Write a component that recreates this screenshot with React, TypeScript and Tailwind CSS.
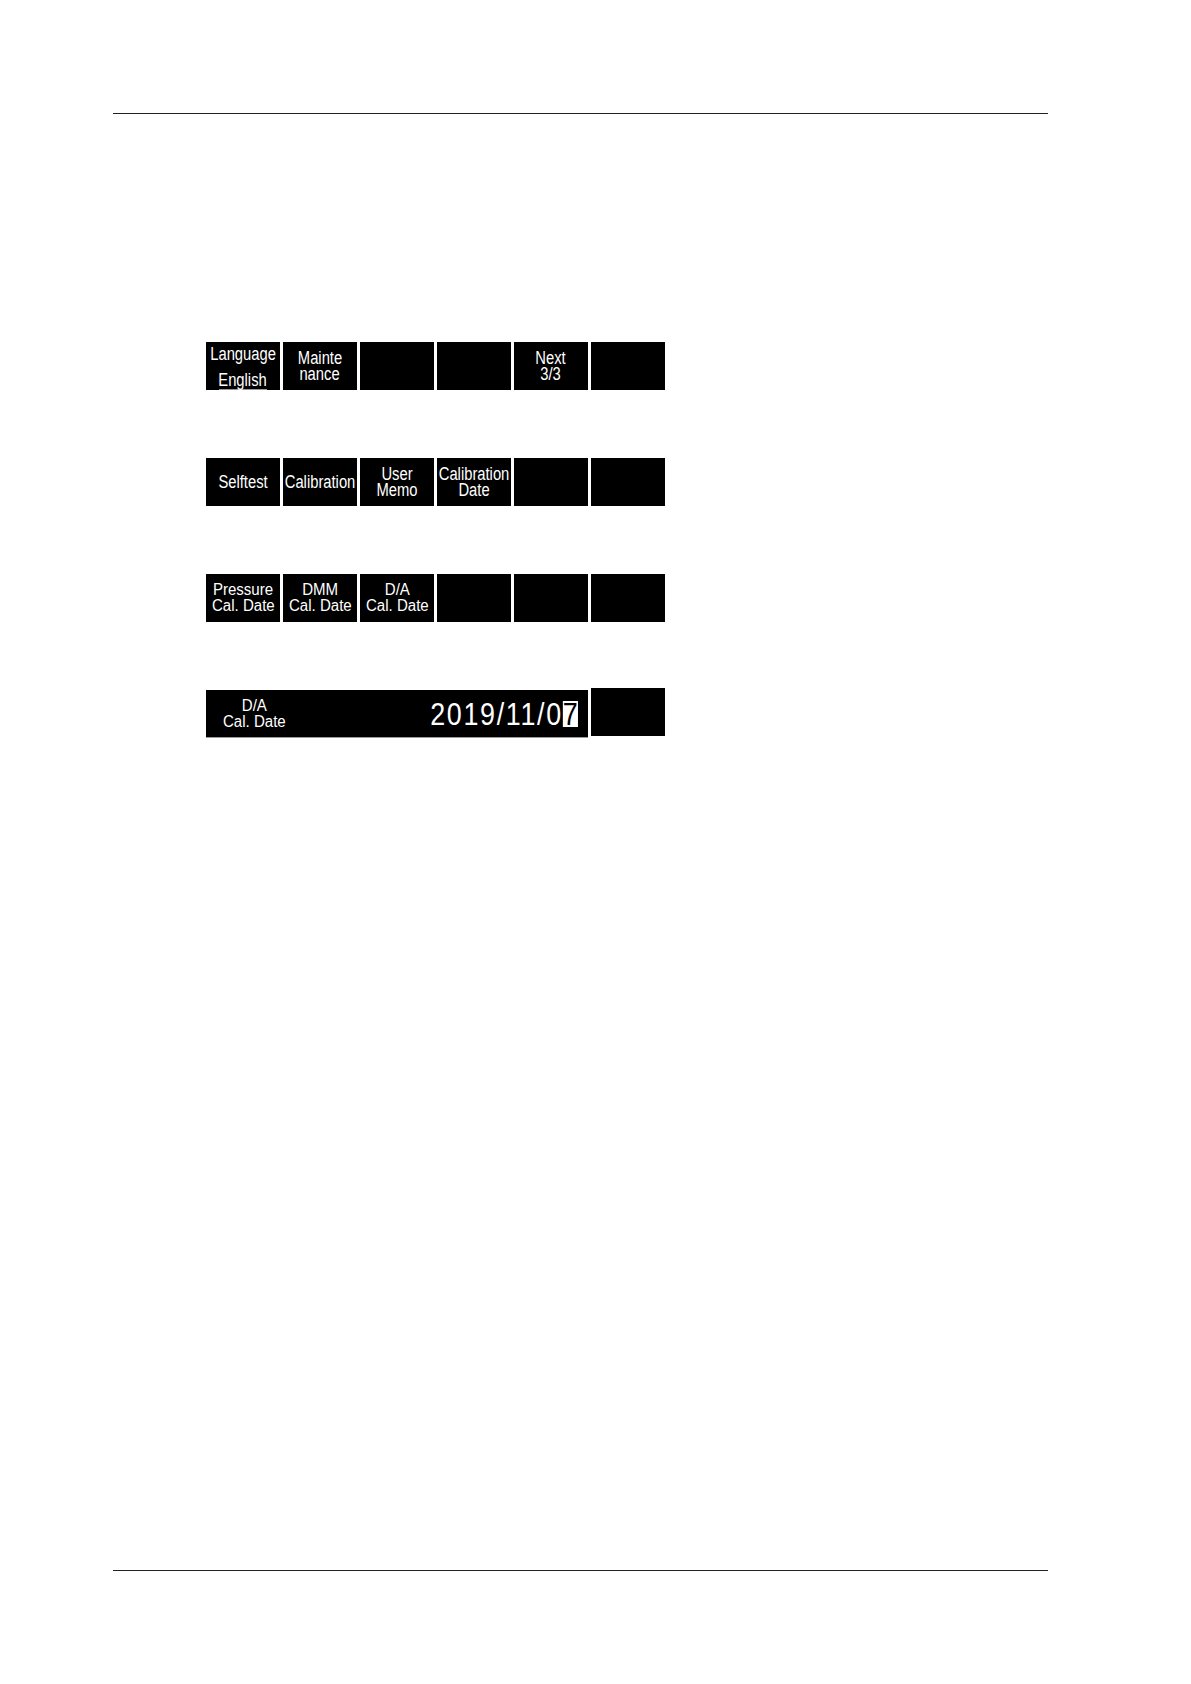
const font = "font-['Liberation_Sans',Arial,sans-serif]";

type Key = { lines: string[] };

function Label({ text, narrow = "scale-x-[0.82]" }: { text: string; narrow?: string }) {
  return <span className={`block whitespace-pre ${narrow}`}>{text}</span>;
}

function SoftKey({ lines, size = "text-[18px]", narrow }: { lines: string[]; size?: string; narrow?: string }) {
  return (
    <div className={`h-[48px] bg-black text-white flex flex-col items-center justify-center leading-[16px] ${size} ${font}`}>
      {lines.map((l) => (
        <Label key={l} text={l} narrow={narrow} />
      ))}
    </div>
  );
}

function KeyRow({ keys, size, narrow }: { keys: Key[]; size?: string; narrow?: string }) {
  return (
    <div className="grid grid-cols-[repeat(6,74px)] gap-x-[3px]">
      {keys.map((k, i) => (
        <SoftKey key={i} lines={k.lines} size={size} narrow={narrow} />
      ))}
    </div>
  );
}

export default function App() {
  const empty: Key = { lines: [] };

  return (
    <div className="w-[1191px] min-h-[1684px] bg-white flex flex-col">
      <div className="mt-[113px] ml-[113px] w-[935px] border-t border-[#222]" />

      <div className="ml-[206px] mt-[228px] flex flex-col gap-y-[68px]">
        {/* row 1 */}
        <div className="grid grid-cols-[repeat(6,74px)] gap-x-[3px]">
          <div className={`h-[48px] bg-black text-white flex flex-col items-center justify-between pt-[2px] text-[18px] leading-[20px] ${font}`}>
            <Label text="Language" />
            <span className="block border-b border-[#9a9a9a] w-[48px] flex justify-center leading-[18px]">
              <Label text="English" />
            </span>
          </div>
          <SoftKey lines={["Mainte", "nance"]} />
          <SoftKey lines={[]} />
          <SoftKey lines={[]} />
          <SoftKey lines={["Next", "3/3"]} />
          <SoftKey lines={[]} />
        </div>

        {/* row 2 */}
        <KeyRow
          keys={[
            { lines: ["Selftest"] },
            { lines: ["Calibration"] },
            { lines: ["User", "Memo"] },
            { lines: ["Calibration", "Date"] },
            empty,
            empty,
          ]}
        />

        {/* row 3 */}
        <KeyRow
          size="text-[16px]"
          narrow="scale-x-[0.94]"
          keys={[
            { lines: ["Pressure", "Cal. Date"] },
            { lines: ["DMM", "Cal. Date"] },
            { lines: ["D/A", "Cal. Date"] },
            empty,
            empty,
            empty,
          ]}
        />

        {/* row 4: date entry */}
        <div className="grid grid-cols-[repeat(6,74px)] gap-x-[3px] -mt-[2px]">
          <div className="col-span-5 h-[48px] mt-[2px] bg-black text-white flex items-center border-b border-[#9a9a9a]">
            <div className={`w-[96px] flex flex-col items-center text-[16px] leading-[16px] ${font}`}>
              <Label text="D/A" narrow="scale-x-[0.94]" />
              <Label text="Cal. Date" narrow="scale-x-[0.94]" />
            </div>
            <div className={`ml-auto mr-[10px] flex items-center text-[32px] leading-[30px] tracking-[2px] origin-right scale-x-[0.84] ${font}`}>
              <span>2019/11/0</span>
              <span className="bg-white text-black leading-[26px] tracking-normal">7</span>
            </div>
          </div>
          <div className="h-[48px] bg-black" />
        </div>
      </div>

      <div className="mt-auto mb-[113px] ml-[113px] w-[935px] border-t border-[#222]" />
    </div>
  );
}
